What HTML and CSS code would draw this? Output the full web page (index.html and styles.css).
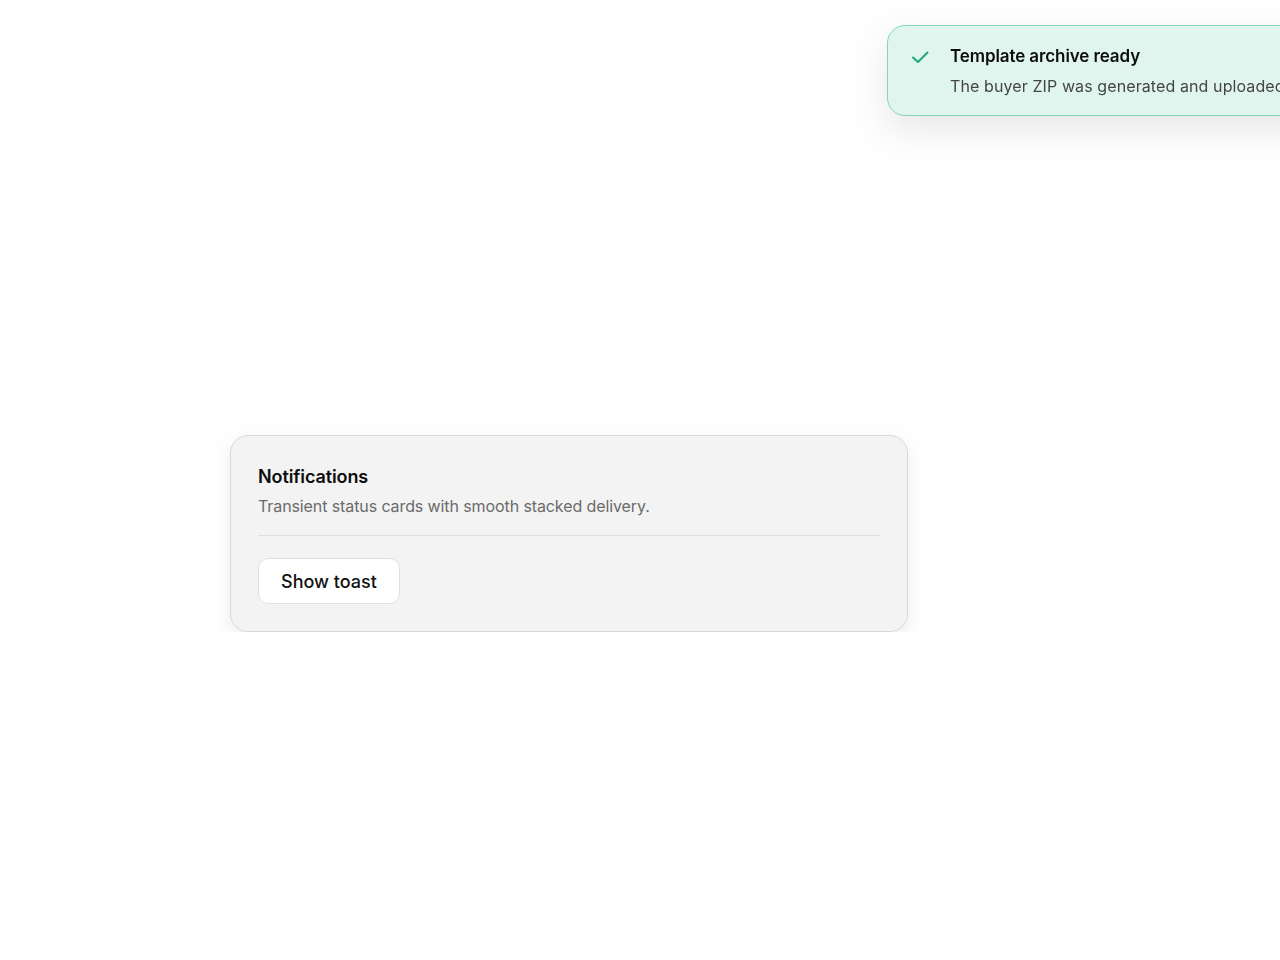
FILE: index.html
```html
<!DOCTYPE html>
<html lang="en">
<head>
<meta charset="utf-8">
<title>Notifications</title>
<link rel="stylesheet" href="styles.css">
</head>
<body>
<main class="page">
  <section class="card">
    <h2 class="card-title">Notifications</h2>
    <p class="card-desc">Transient status cards with smooth stacked delivery.</p>
    <hr class="divider">
    <button class="btn" type="button">Show toast</button>
  </section>
</main>
<div class="toast" role="status">
  <svg class="toast-icon" viewBox="0 0 20 20" width="20" height="20" aria-hidden="true">
    <path d="M3 10.5 L8 15 L17.5 5.5" fill="none" stroke="#1fa877" stroke-width="2" stroke-linecap="round" stroke-linejoin="round"/>
  </svg>
  <div class="toast-body">
    <div class="toast-title">Template archive ready</div>
    <div class="toast-text">The buyer ZIP was generated and uploaded successfully.</div>
  </div>
</div>
</body>
</html>
```

FILE: styles.css
```css
html, body {
  margin: 0;
  padding: 0;
  background: #fefefe;
  overflow: hidden;
  font-family: Inter, "Noto Sans", "Liberation Sans", sans-serif;
  color: #111;
}
.page {
  padding: 435px 0 0 230px;
}
.card {
  box-sizing: border-box;
  width: 678px;
  background: #f3f3f3;
  border: 1px solid #d9d9d9;
  border-radius: 18px;
  padding: 29px 27px 27px 27px;
  box-shadow: 0 6px 16px rgba(0,0,0,0.07);
}
.card-title {
  margin: 0;
  font-size: 18px;
  line-height: 24px;
  font-weight: 600;
  color: #0d0d0d;
  letter-spacing: -0.1px;
}
.card-desc {
  margin: 5px 0 0;
  font-size: 16px;
  line-height: 24px;
  color: #6a6a6a;
  letter-spacing: -0.1px;
}
.divider {
  margin: 17px 0 0;
  border: 0;
  height: 1px;
  background: #e0e0e0;
}
.btn {
  margin-top: 22px;
  height: 46px;
  padding: 0 22px;
  background: #ffffff;
  border: 1px solid #e0e0e0;
  border-radius: 10px;
  font-family: inherit;
  font-size: 18px;
  font-weight: 500;
  color: #111;
  cursor: pointer;
}
.toast {
  position: fixed;
  top: 25px;
  left: 887px;
  width: 470px;
  box-sizing: border-box;
  display: flex;
  gap: 20px;
  padding: 19px 20px 17px 22px;
  background: #e0f5ee;
  border: 1px solid #84d6b3;
  border-radius: 18px;
  box-shadow: 0 14px 36px rgba(0,0,0,0.09);
}
.toast-icon {
  flex: none;
  margin-top: 2px;
}
.toast-title {
  font-size: 17px;
  line-height: 22px;
  font-weight: 600;
  color: #0d0d0d;
  letter-spacing: -0.1px;
}
.toast-text {
  margin-top: 7px;
  font-size: 16px;
  line-height: 24px;
  color: #454545;
  white-space: nowrap;
  letter-spacing: 0.1px;
}
```
